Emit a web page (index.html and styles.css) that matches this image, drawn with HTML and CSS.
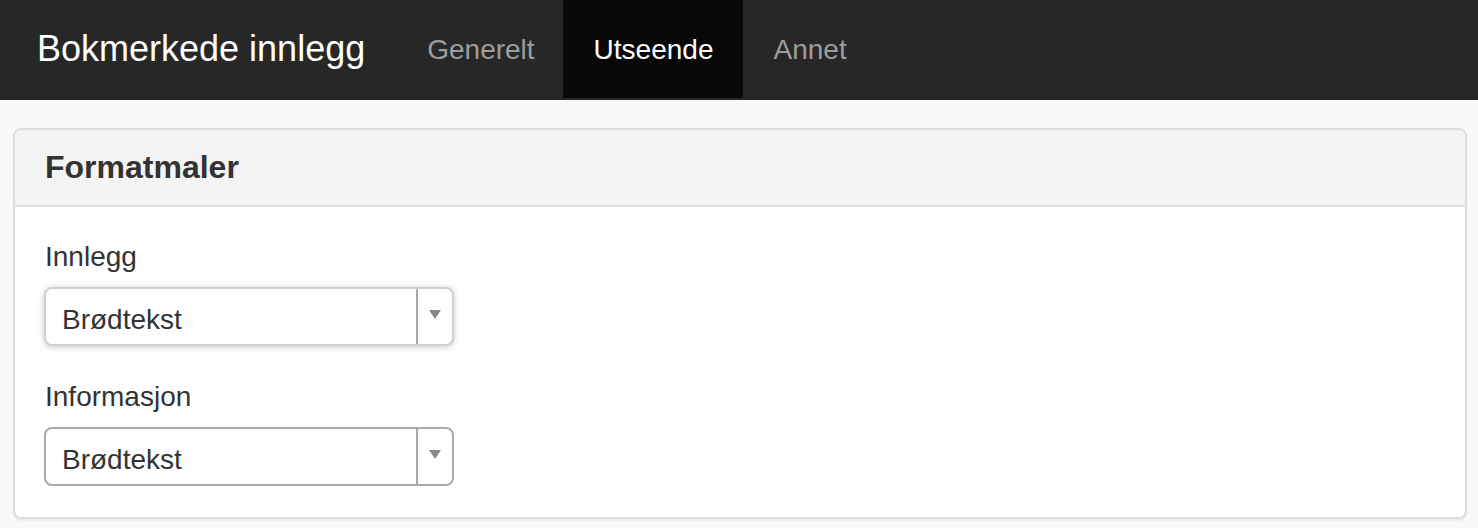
FILE: index.html
```html
<!DOCTYPE html>
<html lang="no">
<head>
<meta charset="utf-8">
<title>Bokmerkede innlegg</title>
<link rel="stylesheet" href="styles.css">
</head>
<body>
<nav class="navbar">
  <a class="brand" href="#">Bokmerkede innlegg</a>
  <ul class="nav">
    <li><a href="#">Generelt</a></li>
    <li class="active"><a href="#">Utseende</a></li>
    <li><a href="#">Annet</a></li>
  </ul>
</nav>
<main class="content">
  <section class="panel">
    <div class="panel-heading"><h3>Formatmaler</h3></div>
    <div class="panel-body">
      <div class="form-group">
        <label>Innlegg</label>
        <div class="select focused">
          <span class="value">Brødtekst</span>
          <span class="toggle"><svg width="12" height="9" viewBox="0 0 12 9"><polygon points="0,0 12,0 6,9" fill="#888"/></svg></span>
        </div>
      </div>
      <div class="form-group">
        <label>Informasjon</label>
        <div class="select">
          <span class="value">Brødtekst</span>
          <span class="toggle"><svg width="12" height="9" viewBox="0 0 12 9"><polygon points="0,0 12,0 6,9" fill="#888"/></svg></span>
        </div>
      </div>
    </div>
  </section>
</main>
</body>
</html>
```

FILE: styles.css
```css
* { box-sizing: border-box; }
html, body { margin: 0; padding: 0; }
body {
  background: #f9f9f9;
  font-family: "Liberation Sans", Arial, Helvetica, sans-serif;
  font-size: 28px;
  line-height: 40px;
  color: #333;
}
a { text-decoration: none; }

.navbar {
  display: flex;
  align-items: stretch;
  height: 100px;
  background: #272727;
  border-bottom: 2px solid #272727;
  padding-left: 7px;
}
.brand {
  display: block;
  padding: 29px 31px 0 30px;
  font-size: 36px;
  line-height: 40px;
  color: #fff;
}
.nav {
  display: flex;
  list-style: none;
  margin: 0;
  padding: 0;
}
.nav li a {
  display: block;
  height: 98px;
  padding: 30px 30px 0;
  line-height: 40px;
  font-size: 28px;
  color: #9d9d9d;
}
.nav li:first-child a {
  padding-left: 31px;
  padding-right: 28px;
}
.nav li.active a {
  background: #080808;
  color: #fff;
  padding-left: 31px;
}

.content {
  padding: 28px 11px 10px 13px;
}
.panel {
  background: #fff;
  border: 2px solid #ddd;
  border-radius: 8px;
  box-shadow: 0 2px 2px rgba(0, 0, 0, 0.05);
  overflow: hidden;
}
.panel-heading {
  background: #f4f4f4;
  border-bottom: 2px solid #ddd;
  padding: 20px 30px;
}
.panel-heading h3 {
  margin: 0;
  font-size: 32px;
  line-height: 35.2px;
  font-weight: bold;
  color: #333;
}
.panel-body {
  padding: 30px 30px 31px 30px;
}
.form-group { margin-bottom: 31px; }
.form-group:last-child { margin-bottom: 0; }
.form-group label {
  display: block;
  margin-bottom: 10px;
  font-weight: normal;
}
.select {
  display: flex;
  width: 410px;
  height: 59px;
  margin-left: -1px;
  border: 2px solid #aaa;
  border-radius: 8px;
  background: #fff;
}
.select.focused {
  border-color: #d0d0d0;
  box-shadow: 0 1px 6px rgba(0, 0, 0, 0.22);
}
.select .value {
  flex: 1;
  padding: 7px 0 0 16px;
  line-height: 47px;
  font-size: 28px;
  color: #333;
}
.select .toggle {
  width: 36px;
  border-left: 2px solid #aaa;
  display: flex;
  justify-content: center;
  align-items: flex-start;
  padding-top: 21px;
}
```
